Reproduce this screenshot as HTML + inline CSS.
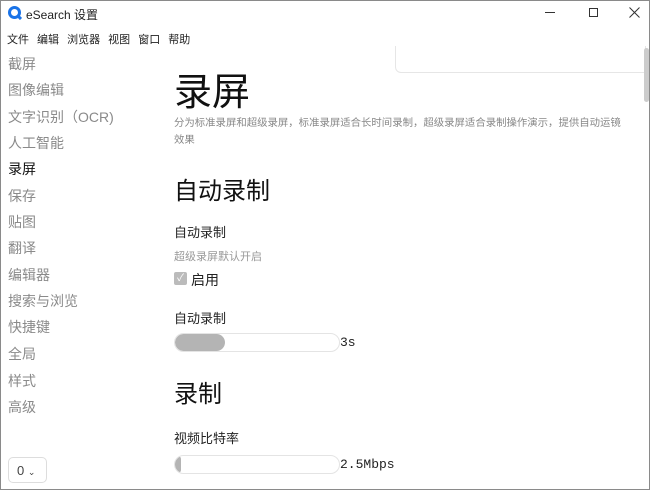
<!DOCTYPE html>
<html><head><meta charset="utf-8"><style>
*{margin:0;padding:0;box-sizing:border-box}
body{width:650px;height:490px;overflow:hidden;background:#fff;font-family:"Liberation Sans","Noto Sans CJK SC",sans-serif;position:relative;border:1px solid #8a8a8a}
.a{position:absolute;white-space:nowrap}
.side{color:#8a8a8a;font-size:14px;left:7px}
.lbl{font-size:13px;color:#222;left:173px}
.bar{position:absolute;left:173px;width:166px;height:19px;border:1px solid #e4e4e4;border-radius:10px;overflow:hidden}
.bar i{position:absolute;left:0;top:0;bottom:0;background:#b4b4b4;border-radius:10px}
</style></head><body>
<svg class="a" style="left:7px;top:5px" width="14" height="14" viewBox="0 0 14 14"><circle cx="6.5" cy="6.5" r="5" fill="none" stroke="#1a73e8" stroke-width="3"/><path d="M9 9l4 4" stroke="#1a73e8" stroke-width="3"/></svg>
<div class="a" style="left:25px;top:5px;font-size:12px;color:#222">eSearch 设置</div>
<div class="a" style="left:544px;top:11px;width:10px;border-top:1px solid #333"></div>
<div class="a" style="left:588px;top:7px;width:9px;height:9px;border:1px solid #333"></div>
<svg class="a" style="left:628px;top:6px" width="11" height="11" viewBox="0 0 11 11"><path d="M0.5 0.5l10 10M10.5 0.5l-10 10" stroke="#333" stroke-width="1"/></svg>
<div class="a" style="left:6px;top:30px;font-size:11px;color:#222;word-spacing:5px">文件 编辑 浏览器 视图 窗口 帮助</div>
<div class="a side" style="top:53px">截屏</div>
<div class="a side" style="top:79px">图像编辑</div>
<div class="a side" style="top:106px">文字识别（OCR)</div>
<div class="a side" style="top:132px">人工智能</div>
<div class="a side" style="top:158px;color:#111">录屏</div>
<div class="a side" style="top:185px">保存</div>
<div class="a side" style="top:211px">贴图</div>
<div class="a side" style="top:237px">翻译</div>
<div class="a side" style="top:264px">编辑器</div>
<div class="a side" style="top:290px">搜索与浏览</div>
<div class="a side" style="top:316px">快捷键</div>
<div class="a side" style="top:343px">全局</div>
<div class="a side" style="top:370px">样式</div>
<div class="a side" style="top:396px">高级</div>
<div class="a" style="left:7px;top:456px;width:39px;height:26px;border:1px solid #ddd;border-radius:5px;font-size:13px;color:#444;padding:5px 0 0 8px">0 <span style="font-size:9px">⌄</span></div>
<div class="a" style="left:394px;top:45px;width:251px;height:27px;border:1px solid #e6e6e6;border-top:none;border-radius:0 0 0 6px"></div>
<div class="a" style="left:643px;top:47px;width:5px;height:54px;background:#ccc;border-radius:3px"></div>
<div class="a" style="left:173px;top:60px;font-size:38px;color:#111">录屏</div>
<div class="a" style="left:173px;top:114px;font-size:10.4px;color:#888;line-height:17px;white-space:normal;width:455px">分为标准录屏和超级录屏，标准录屏适合长时间录制，超级录屏适合录制操作演示，提供自动运镜<br>效果</div>
<div class="a" style="left:173px;top:170px;font-size:24px;color:#111">自动录制</div>
<div class="a lbl" style="top:221px">自动录制</div>
<div class="a" style="left:173px;top:247px;font-size:11px;color:#999">超级录屏默认开启</div>
<div class="a" style="left:173px;top:271px;width:13px;height:13px;background:#bbb;border-radius:2px;color:#fff;font-size:10px;text-align:center;line-height:13px">✓</div>
<div class="a" style="left:190px;top:269px;font-size:14px;color:#222">启用</div>
<div class="a lbl" style="top:307px">自动录制</div>
<div class="bar" style="top:332px"><i style="width:50px"></i></div>
<div class="a" style="left:339px;top:334px;font-family:'Liberation Mono',monospace;font-size:13px;color:#222">3s</div>
<div class="a" style="left:173px;top:373px;font-size:24px;color:#111">录制</div>
<div class="a lbl" style="top:427px">视频比特率</div>
<div class="bar" style="top:454px"><i style="width:6px"></i></div>
<div class="a" style="left:339px;top:456px;font-family:'Liberation Mono',monospace;font-size:13px;color:#222">2.5Mbps</div>
</body></html>
